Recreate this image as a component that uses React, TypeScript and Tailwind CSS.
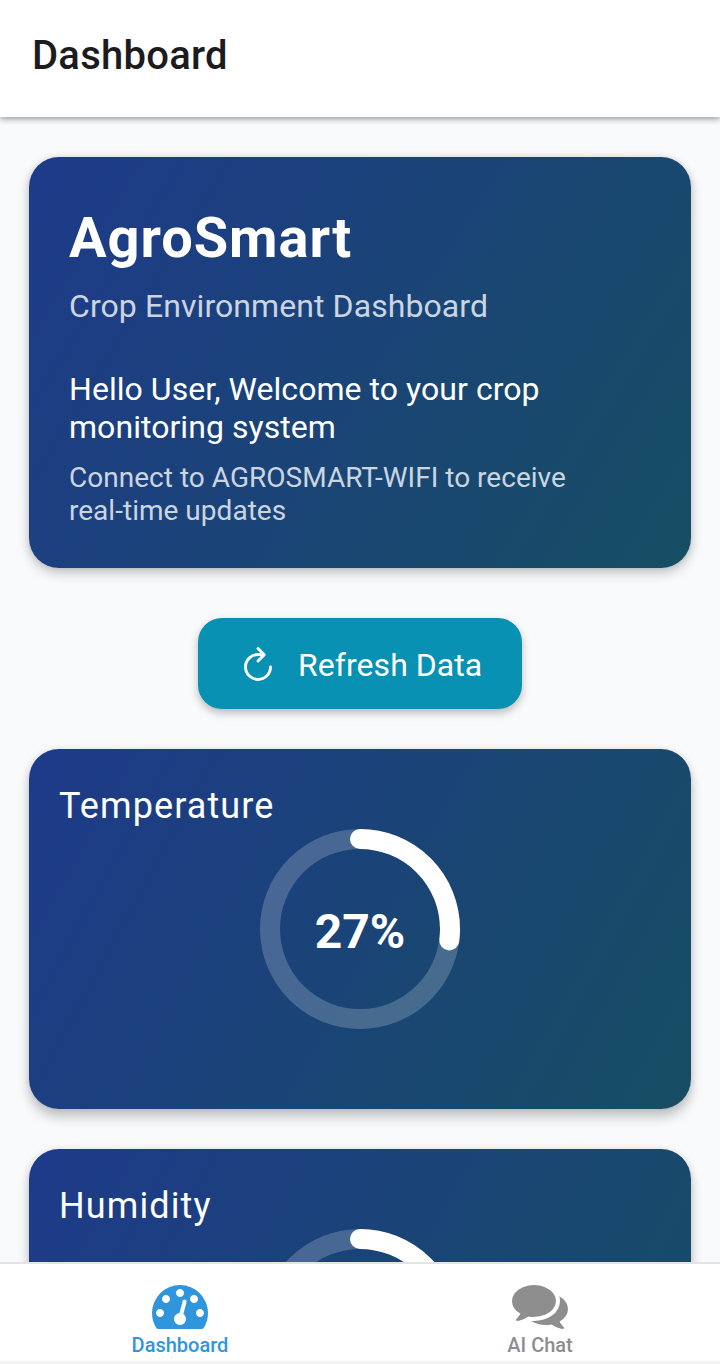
import { IoRefreshOutline } from "react-icons/io5";

function Gauge({ value }: { value: number }) {
  const circumference = 2 * Math.PI * 90;
  return (
    <div className="grid size-[200px] place-items-center self-center">
      <svg viewBox="0 0 200 200" className="col-start-1 row-start-1 size-[200px]" fill="none">
        <circle cx="100" cy="100" r="90" stroke="#fff" strokeOpacity="0.2" strokeWidth="20" />
        <circle
          cx="100"
          cy="100"
          r="90"
          stroke="#fff"
          strokeWidth="20"
          strokeLinecap="round"
          strokeDasharray={`${(circumference * value) / 100} ${circumference}`}
          transform="rotate(-90 100 100)"
        />
      </svg>
      <span className="col-start-1 row-start-1 pt-[5px] text-[48px] leading-[56px] font-bold">{value}%</span>
    </div>
  );
}

function MetricCard({ title, value }: { title: string; value: number }) {
  return (
    <section className="flex h-[360px] shrink-0 flex-col rounded-[30px] bg-[linear-gradient(118.5deg,#1e3a8a,#164e63)] px-[30px] pt-9 text-white shadow-[0_8px_12px_rgba(0,0,0,0.22),0_0_6px_rgba(0,0,0,0.1)]">
      <h2 className="h-[44px] text-[36px] leading-[42px] tracking-[1.1px]">{title}</h2>
      <Gauge value={value} />
    </section>
  );
}

function DashboardIcon() {
  return (
    <svg viewBox="0 256 1792 1408" className="h-11 w-14" fill="currentColor">
      <path d="M384 1152q0-53-37.5-90.5T256 1024t-90.5 37.5T128 1152t37.5 90.5T256 1280t90.5-37.5T384 1152zm192-448q0-53-37.5-90.5T448 576t-90.5 37.5T320 704t37.5 90.5T448 832t90.5-37.5T576 704zm428 481l101-382q6-26-7.5-48.5T1059 725t-48 6.5-30 39.5L880 1153q-60 5-107 43.5t-63 98.5q-20 77 20 146t117 89 146-20 89-117q16-60-6-117t-72-91zm660-33q0-53-37.5-90.5T1536 1024t-90.5 37.5-37.5 90.5 37.5 90.5 90.5 37.5 90.5-37.5T1664 1152zm-640-640q0-53-37.5-90.5T896 384t-90.5 37.5T768 512t37.5 90.5T896 640t90.5-37.5T1024 512zm448 192q0-53-37.5-90.5T1344 576t-90.5 37.5T1216 704t37.5 90.5T1344 832t90.5-37.5T1472 704zm320 448q0 261-141 483-19 29-54 29H195q-35 0-54-29Q0 1414 0 1152q0-182 71-348t191-286 286-191 348-71 348 71 286 191 191 286 71 348z" />
    </svg>
  );
}

function ChatIcon() {
  return (
    <svg viewBox="0 256 1792 1408" className="h-11 w-14" fill="currentColor">
      <path d="M1408 768q0 139-94 257t-256.500 186.500T704 1280q-86 0-176-16-124 88-278 128-36 9-86 16h-3q-11 0-20.500-8t-11.500-21q-1-3-1-6.500t.5-6.500 2-6l2.500-5 3.500-5.500 4-5 4.500-5 4-4.500q5-6 23-25t26-29.500 22.500-29 25-38.500 20.500-44Q142 1103 71 996.500T0 768q0-139 94-257t256.500-186.500T704 256t353.500 68.500T1314 511t94 257zm384 256q0 120-71 224.500T1526 1425q10 24 20.500 44t25 38.500 22.500 29 26 29.500 23 25q1 1 4 4.500t4.500 5 4 5 3.500 5.500l2.500 5 2 6 .5 6.500-1 6.500q-3 14-13 22t-22 7q-50-7-86-16-154-40-278-128-90 16-176 16-271 0-472-132 58 4 88 4 161 0 309-45t264-129q125-92 192-212t67-254q0-77-23-152 129 71 204 178t75 230z" />
    </svg>
  );
}

export default function App() {
  return (
    <div className="flex h-[1364px] w-[720px] flex-col overflow-hidden bg-[#f9fafc] font-[Roboto,sans-serif]">
      <header className="z-10 flex h-[117px] shrink-0 items-start bg-white px-8 pt-8 shadow-[0_2px_6px_rgba(0,0,0,0.4)]">
        <h1 className="text-[40px] leading-[47px] font-medium tracking-[0.25px] text-[#1c1c1e]">Dashboard</h1>
      </header>

      <main className="flex min-h-0 flex-1 flex-col overflow-hidden px-[29px] pt-10">
        <section className="h-[411px] shrink-0 rounded-[30px] bg-[linear-gradient(121.8deg,#1e3a8a,#164e63)] px-10 pt-12 text-white shadow-[0_5px_12px_rgba(0,0,0,0.22),0_0_6px_rgba(0,0,0,0.1)]">
          <h2 className="text-[56px] leading-[66px] font-bold tracking-[0.95px]">AgroSmart</h2>
          <p className="mt-4 text-[32px] leading-[38px] tracking-[0.08px] text-[#cbd5e1]">Crop Environment Dashboard</p>
          <p className="mt-[45px] text-[32px] leading-[38px] tracking-[0.05px]">
            Hello User, Welcome to your crop
            <br />
            monitoring system
          </p>
          <p className="mt-[15px] text-[28px] leading-[33px] tracking-[0.02px] text-[#cbd5e1]">
            Connect to AGROSMART-WIFI to receive
            <br />
            real-time updates
          </p>
        </section>

        <button className="mt-[50px] flex h-[91px] w-[324px] shrink-0 items-center self-center rounded-[24px] bg-[#0891b2] pl-10 text-white shadow-[0_4px_8px_rgba(0,0,0,0.26)]">
          <IoRefreshOutline className="size-10 [&_path]:[stroke-width:37px]" />
          <span className="ml-5 pt-[3px] text-[32px] leading-[38px] tracking-[0.05px]">Refresh Data</span>
        </button>

        <div className="mt-10 flex flex-col gap-10">
          <MetricCard title="Temperature" value={27} />
          <MetricCard title="Humidity" value={62} />
        </div>
      </main>

      <nav className="z-10 grid h-[102px] shrink-0 grid-cols-2 border-t-2 border-b-[3px] border-t-[#e3e4e6] border-b-[#f5f5f5] bg-white pt-[21px] text-[20px] leading-6 font-medium">
        <a className="flex flex-col items-center gap-1 text-[#2f95dc]">
          <DashboardIcon />
          <span>Dashboard</span>
        </a>
        <a className="flex flex-col items-center gap-1 text-[#8e8e8f]">
          <ChatIcon />
          <span>AI Chat</span>
        </a>
      </nav>
    </div>
  );
}
